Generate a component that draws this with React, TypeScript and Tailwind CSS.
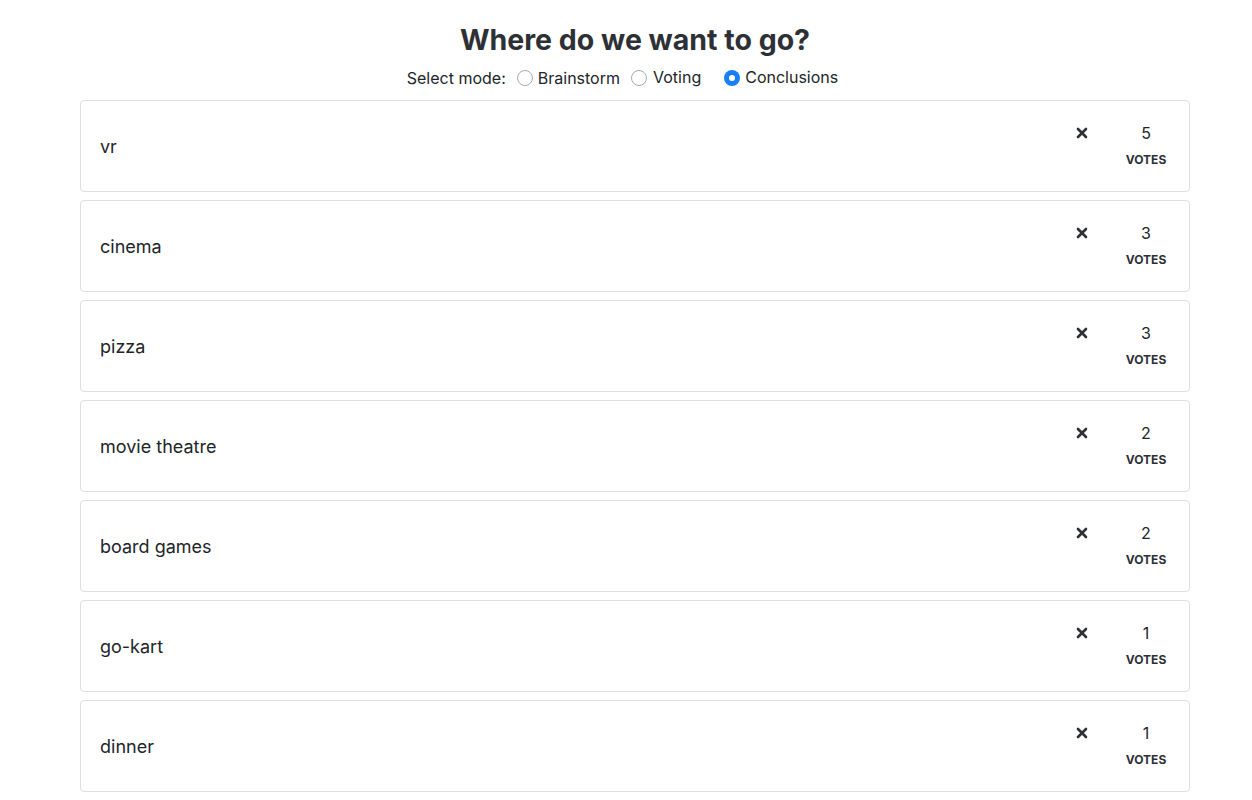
const ideas = [
  { name: "vr", votes: 5 },
  { name: "cinema", votes: 3 },
  { name: "pizza", votes: 3 },
  { name: "movie theatre", votes: 2 },
  { name: "board games", votes: 2 },
  { name: "go-kart", votes: 1 },
  { name: "dinner", votes: 1 },
];

const Radio = ({ checked }: { checked?: boolean }) =>
  checked ? (
    <span className="inline-flex items-center justify-center w-[16px] h-[16px] rounded-full bg-[#1a7ef7]">
      <span className="w-[6px] h-[6px] rounded-full bg-white" />
    </span>
  ) : (
    <span className="inline-block w-[16px] h-[16px] rounded-full border border-[#a9a9a9] bg-white" />
  );

const Times = () => (
  <svg width="12" height="12" viewBox="0 0 12 12" className="text-[#2d3136]">
    <path d="M2 2 L10 10 M10 2 L2 10" stroke="currentColor" strokeWidth="2.6" strokeLinecap="round" />
  </svg>
);

export default function App() {
  return (
    <div className="min-h-screen bg-white text-[#212529] font-['Inter','Liberation_Sans',sans-serif]">
      <div className="ml-[80px] w-[1110px] pt-[22px]">
        <h1 className="text-center text-[28.5px] leading-[36px] font-bold text-[#2d3136]">
          Where do we want to go?
        </h1>
        <div className="flex justify-center items-center text-[16px] leading-[24px] mt-[8px] pr-[25px]">
          <span className="mr-[11px]">Select mode:</span>
          <label className="flex items-center gap-[5px] mr-[11px]">
            <Radio />
            <span>Brainstorm</span>
          </label>
          <label className="flex items-center gap-[6px] mr-[23px]">
            <Radio />
            <span className="-mt-[2px]">Voting</span>
          </label>
          <label className="flex items-center gap-[5px]">
            <Radio checked />
            <span className="-mt-[2px]">Conclusions</span>
          </label>
        </div>
        <div className="mt-[10px] flex flex-col gap-[8px]">
          {ideas.map((idea) => (
            <div
              key={idea.name}
              className="flex h-[92px] rounded-[4px] border border-[#dfdfdf] pl-[19px] pr-[20px] pt-[20px]"
            >
              <div className="flex-1 self-center -mt-[20px] text-[18px] leading-[27px]">
                {idea.name}
              </div>
              <div className="flex items-start">
                <div className="h-[24px] flex items-center">
                  <Times />
                </div>
                <div className="ml-[35px] w-[46px] flex flex-col items-center">
                  <span className="text-[16px] leading-[24px]">{idea.votes}</span>
                  <span className="text-[12px] leading-[14px] font-bold mt-[8px] text-[#2d3136]">
                    VOTES
                  </span>
                </div>
              </div>
            </div>
          ))}
        </div>
      </div>
    </div>
  );
}
